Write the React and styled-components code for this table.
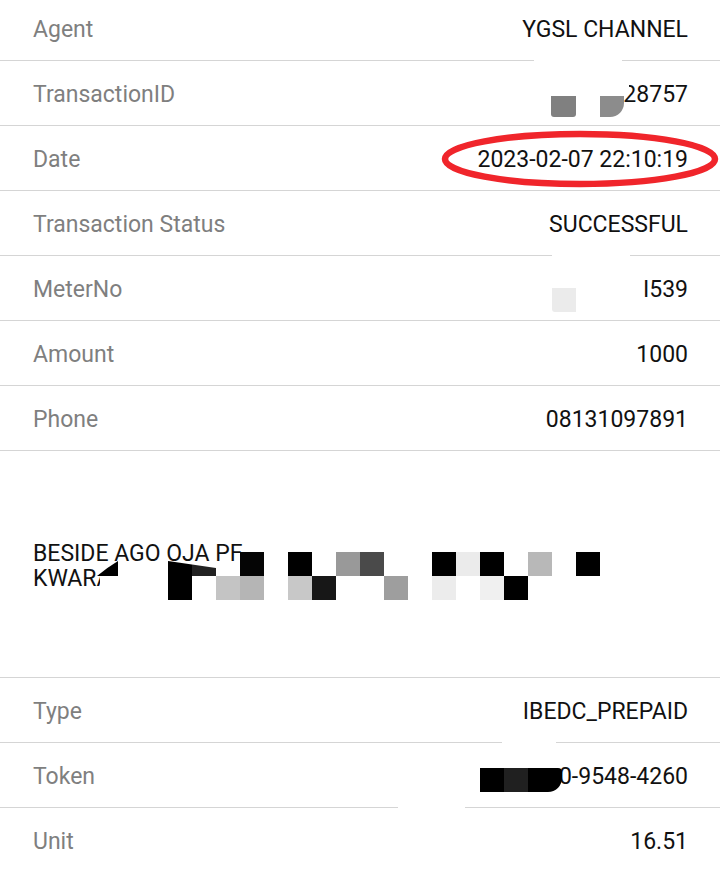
import React from "react";
import styled, { createGlobalStyle } from "styled-components";

const GlobalStyle = createGlobalStyle`
  html, body {
    margin: 0;
    padding: 0;
    background: #fff;
    overflow: hidden;
  }
  body {
    font-family: Roboto, "Noto Sans", sans-serif;
  }
`;

const details = [
  { label: "Agent", value: "YGSL CHANNEL" },
  { label: "TransactionID", value: "28757" },
  { label: "Date", value: "2023-02-07 22:10:19", circled: true },
  { label: "Transaction Status", value: "SUCCESSFUL" },
  { label: "MeterNo", value: "I539" },
  { label: "Amount", value: "1000" },
  { label: "Phone", value: "08131097891" },
];

const tail = [
  { label: "Type", value: "IBEDC_PREPAID" },
  { label: "Token", value: "0-9548-4260" },
  { label: "Unit", value: "16.51" },
];

// blurred bits sitting on top of the receipt, coords relative to the row
const covers = {
  Agent: [{ x: 534, y: 63, w: 88, h: 3, c: "#fff" }],
  TransactionID: [
    { x: 592, y: 18, w: 37, h: 17, c: "#fff", r: "0 0 8px 0" },
    { x: 551, y: 35, w: 25, h: 21, c: "#808080", r: "0 0 3px 3px" },
    { x: 600, y: 35, w: 24, h: 21, c: "#8c8c8c", r: "0 0 14px 0" },
  ],
  "Transaction Status": [{ x: 552, y: 63, w: 78, h: 3, c: "#fff" }],
  MeterNo: [{ x: 552, y: 32, w: 24, h: 24, c: "#ebebeb", r: "0 0 0 3px" }],
  Type: [{ x: 502, y: 63, w: 54, h: 3, c: "#fff" }],
  Token: [
    { x: 480, y: 25, w: 24, h: 24, c: "#000" },
    { x: 504, y: 25, w: 24, h: 24, c: "#202020" },
    { x: 528, y: 25, w: 34, h: 24, c: "#000", r: "0 4px 14px 0" },
    { x: 398, y: 63, w: 67, h: 3, c: "#fff" },
  ],
};

const pixels = [
  // top strip
  [240, 0, "#050505"],
  [288, 0, "#000"],
  [336, 0, "#999"],
  [360, 0, "#4a4a4a"],
  [432, 0, "#000"],
  [456, 0, "#ebebeb"],
  [480, 0, "#000"],
  [528, 0, "#b8b8b8"],
  [576, 0, "#000"],
  // bottom strip
  [168, 1, "#000"],
  [216, 1, "#c4c4c4"],
  [240, 1, "#b5b5b5"],
  [288, 1, "#c8c8c8"],
  [312, 1, "#171717"],
  [384, 1, "#9e9e9e"],
  [432, 1, "#ececec"],
  [480, 1, "#f0f0f0"],
  [504, 1, "#000"],
];

const Page = styled.div`
  width: 720px;
  height: 871px;
  overflow: hidden;
  background: #fff;
`;

const List = styled.div`
  display: flex;
  flex-direction: column;
  margin-top: -4px;
`;

const Row = styled.div`
  position: relative;
  box-sizing: border-box;
  height: ${(p) => p.$height || 65}px;
  display: flex;
  align-items: center;
  justify-content: space-between;
  padding: 2px 32px 0 33px;
  border-bottom: 1px solid #d5d5d5;
  font-size: 23px;
`;

const Label = styled.span`
  color: #7f7f7f;
`;

const Value = styled.span`
  color: #111;
`;

const Address = styled.div`
  color: #111;
  line-height: 25px;
  margin-top: 2px;
`;

const Patch = styled.div`
  position: absolute;
  left: ${(p) => p.$x}px;
  top: ${(p) => p.$y}px;
  width: ${(p) => p.$w}px;
  height: ${(p) => p.$h}px;
  background: ${(p) => p.$c};
  border-radius: ${(p) => p.$r || 0};
`;

const Overlay = styled.svg`
  position: absolute;
  left: 0;
  top: 0;
  overflow: visible;
  pointer-events: none;
`;

const Covers = ({ list }) =>
  (list || []).map((c, i) => (
    <Patch key={i} $x={c.x} $y={c.y} $w={c.w} $h={c.h} $c={c.c} $r={c.r} />
  ));

const DetailRow = ({ label, value, circled }) => (
  <Row>
    <Label>{label}</Label>
    <Value>{value}</Value>
    <Covers list={covers[label]} />
    {circled && (
      <Overlay width="720" height="65">
        <ellipse cx="580" cy="33" rx="135" ry="25" fill="none" stroke="#f0252b" strokeWidth="6.5" />
      </Overlay>
    )}
  </Row>
);

export default function App() {
  return (
    <Page>
      <GlobalStyle />
      <List>
        {details.map((d) => (
          <DetailRow key={d.label} {...d} />
        ))}
        <Row $height={227}>
          <Address>
            BESIDE AGO OJA PF
            <br />
            KWARA
          </Address>
          <Patch $x={100} $y={113} $w={68} $h={37} $c="#fff" />
          {pixels.map(([x, row, c], i) => (
            <Patch key={i} $x={x} $y={101 + row * 24} $w={24} $h={24} $c={c} />
          ))}
          <Overlay width="720" height="227">
            <path d="M97 125 Q108 116 118 110 L118 125 Z" fill="#000" />
            <path d="M168 110 L192 113.5 L192 125 L168 125 Z" fill="#000" />
            <path d="M192 113.5 L216 117 L216 125 L192 125 Z" fill="#222" />
          </Overlay>
        </Row>
        {tail.map((d) => (
          <DetailRow key={d.label} {...d} />
        ))}
      </List>
    </Page>
  );
}
